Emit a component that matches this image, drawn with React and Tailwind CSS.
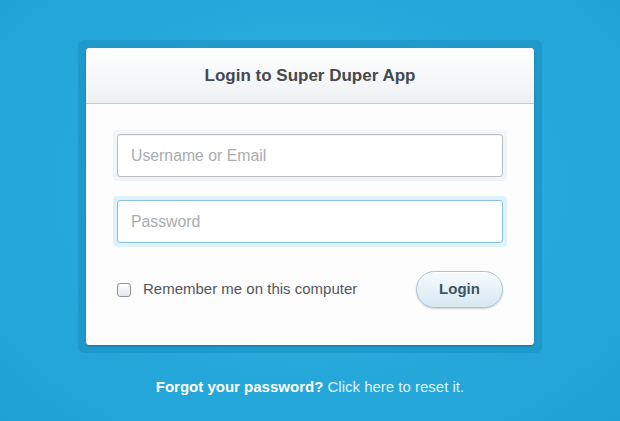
import React, { useState } from "react";

const App = () => {
  const [remember, setRemember] = useState(false);

  return (
    <div
      className="w-full h-[421px] overflow-hidden flex flex-col items-center bg-[radial-gradient(ellipse_at_50%_45%,#37b5e2_0%,#26a9da_55%,#20a1d4_100%)]"
      style={{ fontFamily: '"Liberation Sans", Arial, sans-serif' }}
    >
      <div className="mt-[40px] p-[8px] rounded-[6px] bg-[#1d93c4]/70">
        <div className="w-[448px] bg-white rounded-[4px] overflow-hidden shadow-[0_1px_2px_rgba(0,0,0,0.25)]">
          <div className="h-[56px] flex items-center justify-center bg-gradient-to-b from-white to-[#eef1f3] border-b border-[#c6cdd2]">
            <h1 className="text-[17px] font-bold text-[#45494d] pt-[1px]">Login to Super Duper App</h1>
          </div>

          <div className="px-[27px] pt-[26px] pb-[37px] bg-[#fdfdfd]">
            <div className="p-[4px] rounded-[4px] bg-[#f1f5f7]">
              <input
                type="text"
                placeholder="Username or Email"
                className="w-full h-[43px] px-[13px] rounded-[3px] border border-[#b7bec3] bg-white text-[15.8px] text-[#555] placeholder-[#a9acae] outline-none shadow-[inset_0_1px_1px_rgba(0,0,0,0.06)]"
              />
            </div>

            <div className="mt-[15px] p-[4px] rounded-[4px] bg-[#e0f1fa]">
              <input
                type="password"
                placeholder="Password"
                className="w-full h-[43px] px-[13px] rounded-[3px] border border-[#86c3dc] bg-white text-[15.8px] text-[#555] placeholder-[#a9acae] outline-none"
              />
            </div>

            <div className="mt-[24px] px-[4px] flex items-center justify-between">
              <label className="flex items-center gap-[12px] cursor-pointer">
                <span
                  onClick={() => setRemember(!remember)}
                  className="w-[14px] h-[14px] rounded-[3px] border border-[#8e9499] bg-gradient-to-b from-white to-[#e4e7ea] flex items-center justify-center text-[10px] text-[#444]"
                >
                  {remember ? "✓" : ""}
                </span>
                <span className="text-[15px] text-[#525659]">Remember me on this computer</span>
              </label>

              <button className="w-[87px] h-[37px] rounded-full border border-[#a9c3d1] bg-gradient-to-b from-[#f7fbfd] to-[#d6e8f1] text-[15px] font-bold text-[#3d5566] shadow-[0_1px_2px_rgba(0,0,0,0.18),inset_0_1px_0_#fff]">
                Login
              </button>
            </div>
          </div>
        </div>
      </div>

      <p className="mt-[23px] text-[15px] font-bold text-white">
        Forgot your password? <a href="#" className="font-normal text-[#dff3fb]">Click here to reset it.</a>
      </p>
    </div>
  );
};

export default App;
